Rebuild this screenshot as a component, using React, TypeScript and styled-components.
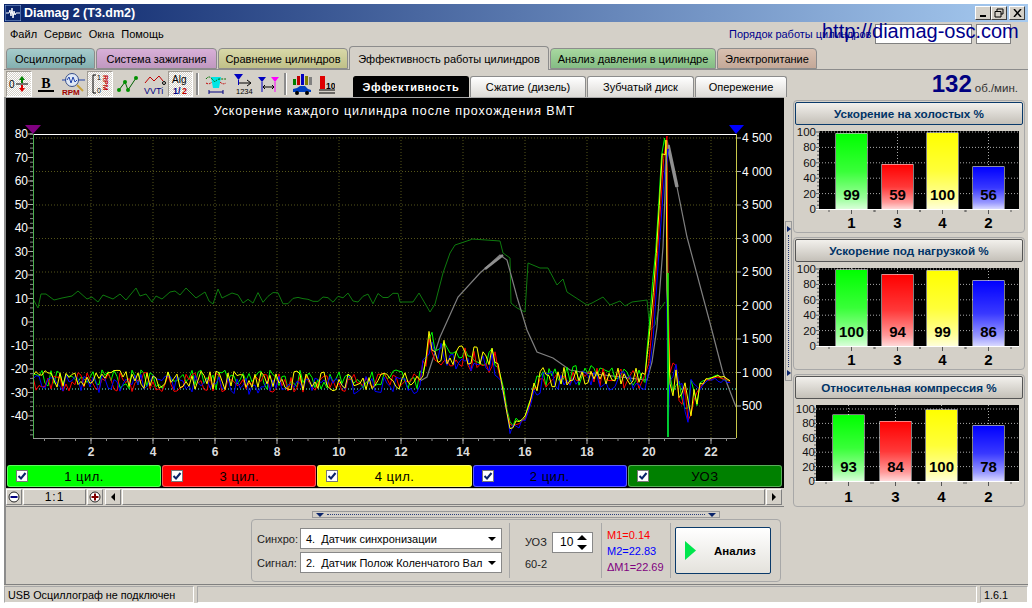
import { createGlobalStyle, styled } from 'styled-components';

const GlobalStyle = createGlobalStyle`
    html, body {
        margin: 0;
        padding: 0;
        background: #fff;
    }
    body {
        font-family: 'Liberation Sans', Arial, sans-serif;
        font-size: 11px;
        color: #000;
    }
`;

const Window = styled.div`
    position: relative;
    box-sizing: border-box;
    width: 1024px;
    height: 599px;
    margin: 4px 0 0 4px;
    background: #d4d0c8;
    display: flex;
    flex-direction: column;
    overflow: hidden;
`;

const TitleBar = styled.div`
    height: 18px;
    flex: none;
    display: flex;
    align-items: center;
    padding: 0 3px 0 1px;
    background: linear-gradient(90deg, #0a246a, #a6caf0);
    color: #fff;
`;

const TitleText = styled.span`
    flex: 1;
    margin-left: 3px;
    font-size: 12.5px;
    font-weight: bold;
`;

const WinButton = styled.button<{ $gap?: number }>`
    width: 16px;
    height: 14px;
    padding: 0;
    margin-left: ${(p) => p.$gap ?? 0}px;
    display: flex;
    align-items: center;
    justify-content: center;
    background: #d4d0c8;
    border: 1px solid;
    border-color: #fff #404040 #404040 #fff;
`;

const MenuBar = styled.div`
    height: 23px;
    flex: none;
    display: flex;
    align-items: center;
    padding: 0 17px 0 6px;
`;

const MenuItem = styled.span`
    margin-right: 7px;
    font-size: 11px;
`;

const OrderLabel = styled.span`
    margin-left: auto;
    width: 142px;
    color: #00008b;
    font-size: 11px;
    white-space: nowrap;
`;

const OrderField = styled.div<{ $width: number }>`
    box-sizing: border-box;
    width: ${(p) => p.$width}px;
    height: 20px;
    margin-left: 4px;
    background: #fff;
    border: 1px solid #808080;
`;

const Watermark = styled.a`
    position: absolute;
    left: 818px;
    top: 16px;
    color: #00008b;
    font-size: 20px;
    white-space: nowrap;
`;

const TabRow = styled.div`
    box-sizing: border-box;
    height: 25px;
    flex: none;
    display: flex;
    align-items: flex-end;
    gap: 1px;
    padding-left: 2px;
    border-bottom: 1px solid #8c8c8c;
`;

const Tab = styled.div<{ $color?: string; $width: number }>`
    box-sizing: border-box;
    width: ${(p) => p.$width}px;
    height: ${(p) => (p.$color ? 21 : 24)}px;
    margin-bottom: ${(p) => (p.$color ? 0 : -1)}px;
    display: flex;
    align-items: center;
    justify-content: center;
    border: 1px solid #8c8c8c;
    border-bottom: ${(p) => (p.$color ? '1px solid #8c8c8c' : 'none')};
    border-radius: 4px 4px 0 0;
    background: ${(p) => p.$color ?? '#d4d0c8'};
    font-size: 11px;
    white-space: nowrap;
`;

const ToolRow = styled.div`
    height: 27px;
    flex: none;
    display: flex;
    align-items: flex-end;
    padding-left: 2px;
`;

const ToolGroup = styled.div`
    width: 347px;
    height: 26px;
    flex: none;
    display: flex;
    align-items: center;
`;

const ToolButton = styled.div<{ $width: number; $pressed?: boolean }>`
    box-sizing: border-box;
    width: ${(p) => p.$width}px;
    height: 26px;
    flex: none;
    display: flex;
    align-items: center;
    justify-content: center;
    ${(p) => p.$pressed && `
        background: repeating-conic-gradient(#fff 0 25%, #d4d0c8 0 50%) 0 0 / 2px 2px;
        border: 1px solid;
        border-color: #a09c94 #fff #fff #a09c94;
    `}
`;

const ToolSeparator = styled.div<{ $margin: number }>`
    width: 2px;
    height: 22px;
    flex: none;
    margin: 0 ${(p) => p.$margin}px;
    background: #8c8c8c;
    border-right: 1px solid #fff;
`;

const SubTab = styled.div<{ $width: number; $active?: boolean }>`
    box-sizing: border-box;
    width: ${(p) => p.$width}px;
    height: 21px;
    margin-right: 1px;
    display: flex;
    align-items: center;
    justify-content: center;
    border: 1px solid ${(p) => (p.$active ? '#000' : '#8c8c8c')};
    border-bottom: none;
    border-radius: 3px 3px 0 0;
    background: ${(p) => (p.$active ? '#000' : 'linear-gradient(#fff, #dcdad6)')};
    color: ${(p) => (p.$active ? '#fff' : '#000')};
    font-weight: ${(p) => (p.$active ? 'bold' : 'normal')};
    letter-spacing: ${(p) => (p.$active ? '0.6px' : '0')};
    font-size: 11px;
`;

const Rpm = styled.div`
    margin-left: auto;
    margin-right: 10px;
    display: flex;
    align-items: baseline;
    gap: 3px;
    color: #333;
    font-size: 11.5px;
    white-space: nowrap;
`;

const RpmValue = styled.b`
    color: #000080;
    font-size: 24px;
    line-height: 26px;
`;

const Workspace = styled.div`
    height: 487px;
    flex: none;
    display: flex;
`;

const LeftColumn = styled.div`
    box-sizing: border-box;
    width: 780px;
    flex: none;
    display: flex;
    flex-direction: column;
    border-left: 2px solid #8c8c8c;
`;

const ChartPanel = styled.div`
    background: #000;
    border-top: 1px solid #aaa;
`;

const ChartTitle = styled.div`
    height: 22px;
    line-height: 27px;
    text-align: center;
    color: #fff;
    font-size: 12.5px;
    letter-spacing: 0.9px;
    margin-left: -1px;
`;

const PlotSvg = styled.svg`
    display: block;
`;

const Legend = styled.div`
    height: 23px;
    display: flex;
    gap: 1px;
    padding: 0 2px 1px 1px;
    box-sizing: border-box;
`;

const LegendItem = styled.div<{ $color: string }>`
    position: relative;
    flex: 1;
    display: flex;
    align-items: center;
    justify-content: center;
    background: ${(p) => p.$color};
    border-radius: 3px;
    box-shadow: inset 0 0 0 1px rgba(255, 255, 255, 0.35);
    font-size: 13px;
    letter-spacing: 0.5px;
`;

const LegendCheck = styled.span`
    position: absolute;
    left: 9px;
    top: 5px;
    box-sizing: border-box;
    width: 12px;
    height: 12px;
    display: flex;
    background: #fff;
    border: 1px solid #777;
`;

const ScrollRow = styled.div`
    box-sizing: border-box;
    height: 19px;
    padding-top: 1px;
    display: flex;
    align-items: flex-start;
    gap: 1px;
    border-bottom: 1px solid #808080;
`;

const ScrollButton = styled.div<{ $width: number; $before?: number; $after?: number }>`
    box-sizing: border-box;
    width: ${(p) => p.$width}px;
    height: 16px;
    flex: none;
    margin: 0 ${(p) => p.$after ?? 0}px 0 ${(p) => p.$before ?? 0}px;
    display: flex;
    align-items: center;
    justify-content: center;
    background: #d4d0c8;
    border: 1px solid;
    border-color: #fff #808080 #808080 #fff;
    font-size: 12px;
    letter-spacing: 1px;
`;

const ScrollTrack = styled(ScrollButton)`
    flex: 1;
    width: auto;
`;

const CollapseStrip = styled.div`
    box-sizing: border-box;
    width: 408px;
    height: 7px;
    margin: 4px 0 1px 306px;
    display: flex;
    align-items: center;
    gap: 3px;
    padding: 0 3px;
    border: 1px solid #999;
`;

const StripDots = styled.span`
    flex: 1;
    border-top: 1px dotted #2a3f7a;
`;

const ControlPanel = styled.div`
    box-sizing: border-box;
    width: 530px;
    height: 63px;
    margin-left: 245px;
    display: flex;
    align-items: center;
    border: 1px solid #a8a8a8;
    border-radius: 4px;
    padding: 0 8px 0 5px;
`;

const SelectGrid = styled.div`
    display: grid;
    grid-template-columns: 43px 202px;
    align-items: center;
    row-gap: 3px;
`;

const FieldLabel = styled.span`
    font-size: 11px;
    color: #222;
`;

const SelectBox = styled.div`
    box-sizing: border-box;
    height: 21px;
    display: flex;
    align-items: center;
    justify-content: space-between;
    padding: 0 5px;
    background: #fff;
    border: 1px solid #888;
    font-size: 11px;
    white-space: nowrap;
`;

const Caret = styled.span<{ $color?: string }>`
    width: 0;
    height: 0;
    border: 4px solid transparent;
    border-top: 4px solid ${(p) => p.$color ?? '#000'};
    border-bottom: none;
`;

const Divider = styled.div<{ $margin: string }>`
    width: 1px;
    height: 55px;
    margin: ${(p) => p.$margin};
    background: #a8a8a8;
    flex: none;
`;

const UozBlock = styled.div`
    display: grid;
    grid-template-columns: 27px 41px;
    align-items: center;
    row-gap: 5px;
`;

const SpinBox = styled.div`
    box-sizing: border-box;
    height: 21px;
    display: flex;
    align-items: center;
    justify-content: space-between;
    padding: 0 5px 0 7px;
    background: #fff;
    border: 1px solid #888;
    font-size: 12px;
`;

const MeasureBlock = styled.div`
    width: 63px;
    display: flex;
    flex-direction: column;
    gap: 2px;
    flex: none;
`;

const Measure = styled.span<{ $color: string }>`
    color: ${(p) => p.$color};
    font-size: 11px;
    line-height: 14px;
    white-space: nowrap;
`;

const AnalyzeButton = styled.div`
    box-sizing: border-box;
    width: 96px;
    height: 47px;
    display: flex;
    align-items: center;
    padding-left: 9px;
    gap: 18px;
    border: 1px solid #0a3a6a;
    border-radius: 2px;
    background: linear-gradient(#fff, #e4e2dc);
    font-size: 11.5px;
    font-weight: bold;
`;

const SideSplitter = styled.div`
    box-sizing: border-box;
    width: 7px;
    height: 160px;
    flex: none;
    margin: 124px 1px 0 1px;
    display: flex;
    flex-direction: column;
    align-items: center;
    justify-content: space-between;
    padding: 4px 0;
    border: 1px solid #999;
`;

const SideDots = styled.span`
    flex: 1;
    margin: 3px 0;
    border-left: 1px dotted #2a3f7a;
`;

const RightColumn = styled.div`
    width: 232px;
    flex: none;
    display: flex;
    flex-direction: column;
    gap: 4px;
    padding-top: 3px;
`;

const Group = styled.section`
    box-sizing: border-box;
    height: 133px;
    padding: 1px;
    border: 1px solid #a8a8a8;
    border-radius: 4px;
`;

const GroupHeader = styled.div<{ $focus?: boolean }>`
    box-sizing: border-box;
    height: 23px;
    display: flex;
    align-items: center;
    justify-content: center;
    border: 1px solid ${(p) => (p.$focus ? '#0a3a6a' : '#555')};
    border-radius: 2px;
    background: linear-gradient(#f2f0ec, #c4c0b8);
    color: #003366;
    font-size: 11.7px;
    font-weight: bold;
`;

const BarSvg = styled.svg`
    display: block;
`;

const StatusBar = styled.div`
    flex: 1;
    display: flex;
    gap: 3px;
    padding-top: 1px;
    border-top: 1px solid #808080;
`;

const StatusCell = styled.div<{ $width?: number }>`
    box-sizing: border-box;
    ${(p) => (p.$width ? `width: ${p.$width}px; flex: none;` : 'flex: 1;')}
    display: flex;
    align-items: center;
    padding-left: 3px;
    border: 1px solid;
    border-color: #a8a8a8 #fff #fff #a8a8a8;
    font-size: 10.8px;
    white-space: nowrap;
`;

// ---- chart data ----

function makeNoise(seed: number) {
    let s = seed;
    return () => {
        s = (s * 1664525 + 1013904223) % 4294967296;
        return s / 4294967296 - 0.5;
    };
}

type Pt = [number, number];

function lerp(points: Pt[], x: number) {
    for (let i = 1; i < points.length; i++) {
        if (x <= points[i][0]) {
            const [x0, y0] = points[i - 1];
            const [x1, y1] = points[i];
            return y0 + ((y1 - y0) * (x - x0)) / (x1 - x0 || 1);
        }
    }
    return points[points.length - 1][1];
}

const envelope: Pt[] = [
    [33, 381], [418, 382], [422, 368], [430, 340], [437, 352], [467, 358], [497, 362],
    [503, 388], [510, 427], [527, 416], [533, 387], [543, 378], [600, 377], [646, 378],
    [650, 343], [654, 290], [658, 240], [663, 157], [666, 136],
];

const envelopeTail: Pt[] = [
    [669, 362], [672, 375], [678, 385], [687, 403], [694, 392], [700, 386], [710, 377], [730, 380],
];

function amplitude(x: number) {
    if (x < 420) return 20;
    if (x < 500) return 26;
    if (x < 535) return 8;
    if (x < 646) return 20;
    if (x < 665) return 14;
    if (x < 700) return 40;
    return 4;
}

function signal(seed: number, offset: number, extra: Pt[]) {
    const rnd = makeNoise(seed);
    const pts: string[] = [];
    for (let x = 33; x <= 666; x += 3) {
        // the traces fan out sideways on the steep part of the spike
        const px = x >= 648 ? x + offset * 0.7 : x;
        pts.push(`${px},${(lerp(envelope, x) + offset + rnd() * amplitude(x)).toFixed(1)}`);
    }
    extra.forEach(([x, y]) => pts.push(`${x},${y}`));
    for (let x = 670; x <= 730; x += 3) {
        pts.push(`${x},${(lerp(envelopeTail, x) + offset * 0.7 + rnd() * amplitude(x)).toFixed(1)}`);
    }
    return pts.join(' ');
}

const traces = [
    { color: '#00ff00', points: signal(11, -2, [[667, 160], [668, 437], [668, 370]]) },
    { color: '#ff0000', points: signal(29, 1, [[667, 136], [668, 288]]) },
    { color: '#0000ff', points: signal(53, 3, [[666, 175], [668, 437], [669, 400]]) },
    { color: '#ffff00', points: signal(97, -1, [[666, 140], [667, 290]]) },
];

const grayLine =
    '420,381 427,377 440,337 458,297 480,273 500,255 507,260 517,297 527,330 537,352 553,358 570,370 587,373 647,380 652,362 657,327 663,247 667,140 677,187 687,237 710,323 723,373 736,407';

const uozHead: Pt[] = [[33, 299], [38, 308], [41, 294], [46, 294], [54, 300], [62, 298], [72, 296], [78, 291], [87, 299], [92, 297], [98, 302], [103, 295], [113, 299], [120, 294], [126, 300], [136, 288], [140, 296], [146, 294], [152, 302], [156, 296], [162, 299], [170, 292], [175, 291], [180, 295], [186, 288], [196, 298], [205, 292], [209, 301], [213, 304], [218, 289], [222, 298], [232, 293]];

function makeUoz() {
    const rnd = makeNoise(7);
    const pts: string[] = uozHead.map(([x, y]) => `${x},${y}`);
    for (let x = 238; x < 400; x += 5) {
        pts.push(`${x},${(298 + rnd() * 12).toFixed(1)}`);
    }
    const tail = '400,302 413,302 419,293 430,312 435,304 443,273 450,253 455,245 470,240 472,239 500,241 503,253 510,258 511,303 517,308 525,312 528,263 540,268 548,268 557,285 563,279 567,292 587,305 592,303 603,297 610,305 620,301 625,306 632,302 647,300 650,330 655,325 658,312 665,302';
    return `${pts.join(' ')} ${tail}`;
}

const uozLine = makeUoz();

const xLabels = [2, 4, 6, 8, 10, 12, 14, 16, 18, 20, 22];
const xPos = (v: number) => 29 + 31 * v;
const leftLabels = [80, 70, 60, 50, 40, 30, 20, 10, 0, -10, -20, -30, -40];
const leftPos = (v: number) => 322 - v * 2.35;
const rightLabels = ['4 500', '4 000', '3 500', '3 000', '2 500', '2 000', '1 500', '1 000', '500'];
const rightPos = (i: number) => 138 + i * 33.5;

function MainPlot() {
    const minorX: number[] = [];
    for (let v = 0.5; v < 23; v += 0.5) minorX.push(xPos(v));
    const minorY: number[] = [];
    for (let y = 134; y < 438; y += 4.7) minorY.push(y);
    return (
        <PlotSvg width={778} height={345} viewBox="6 120 778 345">
            {rightLabels.map((_, i) => (
                <line key={i} x1={33} x2={736} y1={rightPos(i)} y2={rightPos(i)} stroke="#55551a" strokeDasharray="1 2" />
            ))}
            {xLabels.map((v) => (
                <line key={v} x1={xPos(v)} x2={xPos(v)} y1={134} y2={438} stroke="#55551a" strokeDasharray="1 2" />
            ))}
            <line x1={33} x2={736} y1={389} y2={389} stroke="#66ffee" strokeDasharray="1 2" />
            <polyline points={uozLine} fill="none" stroke="#0e7a0e" />
            <polyline points={grayLine} fill="none" stroke="#808080" strokeWidth={1.2} />
            <line x1={668} x2={677} y1={145} y2={187} stroke="#909090" strokeWidth={3.5} />
            <line x1={485} x2={503} y1={269} y2={255} stroke="#909090" strokeWidth={2.5} />
            {traces.map((t) => (
                <polyline key={t.color} points={t.points} fill="none" stroke={t.color} />
            ))}
            <line x1={668} x2={668} y1={273} y2={437} stroke="#00ff00" strokeWidth={1.5} />

            <line x1={33} x2={736} y1={134.5} y2={134.5} stroke="#fff" />
            <line x1={33.5} x2={33.5} y1={134} y2={438} stroke="#4caf50" />
            <line x1={736.5} x2={736.5} y1={134} y2={438} stroke="#c8c84a" />
            <line x1={33} x2={736} y1={438.5} y2={438.5} stroke="#999" />
            {minorY.map((y) => (
                <line key={y} x1={30} x2={33} y1={y} y2={y} stroke="#888" />
            ))}
            {minorX.map((x) => (
                <line key={x} x1={x} x2={x} y1={438} y2={441} stroke="#888" />
            ))}
            {xLabels.map((v) => (
                <line key={v} x1={xPos(v)} x2={xPos(v)} y1={438} y2={444} stroke="#aaa" />
            ))}
            {leftLabels.map((v) => (
                <line key={v} x1={28} x2={33} y1={leftPos(v)} y2={leftPos(v)} stroke="#aaa" />
            ))}
            {rightLabels.map((_, i) => (
                <line key={i} x1={737} x2={741} y1={rightPos(i)} y2={rightPos(i)} stroke="#aaa" />
            ))}
            <polygon points="25,125 41,125 33,134" fill="#800080" />
            <polygon points="729,125 744,125 736,134" fill="#0000ff" />
            <g fontFamily="'Liberation Sans', sans-serif" fontSize={12} fill="#fff">
                {leftLabels.map((v) => (
                    <text key={v} x={28} y={leftPos(v) + 4} textAnchor="end">{v}</text>
                ))}
                {rightLabels.map((t, i) => (
                    <text key={t} x={742} y={rightPos(i) + 4}>{t}</text>
                ))}
                {xLabels.map((v) => (
                    <text key={v} x={xPos(v)} y={456} textAnchor="middle" fontWeight="bold" fill="#ddd">{v}</text>
                ))}
            </g>
        </PlotSvg>
    );
}

// ---- right side bars ----

interface BarChartProps {
    left: number;
    top: number;
    zero: number;
    full: number;
    labelY: number;
    labelEnd: number;
    bars: { x: number; value: number; name: string; color: string }[];
    id: string;
}

function BarChart({ left, top, zero, full, labelY, labelEnd, bars, id }: BarChartProps) {
    const scale = (zero - full) / 100;
    const ticks = [0, 20, 40, 60, 80, 100];
    const minor: number[] = [];
    for (let v = 0; v <= 100; v += 5) minor.push(v);
    return (
        <BarSvg width={228} height={106} viewBox="0 0 228 106">
            <defs>
                {bars.map((b) => (
                    <linearGradient key={b.name} id={`${id}${b.name}`} x1="0" y1="0" x2="0" y2="1">
                        <stop offset="0" stopColor={b.color} />
                        <stop offset="0.5" stopColor={b.color} stopOpacity={0.78} />
                        <stop offset="0.85" stopColor={b.color} stopOpacity={0.4} />
                        <stop offset="1" stopColor={b.color} stopOpacity={0.15} />
                    </linearGradient>
                ))}
            </defs>
            <rect x={left} y={top} width={227 - left - 3} height={zero - top} fill="#000" />
            {ticks.slice(1).map((v) => (
                <line key={v} x1={left} x2={224} y1={zero - v * scale} y2={zero - v * scale} stroke="#aaa" strokeDasharray="1 2" />
            ))}
            {bars.map((b) => (
                <line key={b.name} x1={b.x + 16.5} x2={b.x + 16.5} y1={top} y2={zero} stroke="#aaa" strokeDasharray="1 2" />
            ))}
            {minor.map((v) => (
                <line key={v} x1={left - (v % 20 === 0 ? 3 : 2)} x2={left} y1={zero - v * scale} y2={zero - v * scale} stroke="#555" />
            ))}
            <line x1={left - 3} x2={224} y1={zero + 0.5} y2={zero + 0.5} stroke="#fff" />
            {bars.map((b) => (
                <g key={b.name}>
                    <rect x={b.x + 0.5} y={zero - b.value * scale + 0.5} width={32} height={b.value * scale} fill="#fff" />
                    <rect x={b.x + 1} y={zero - b.value * scale + 1} width={31} height={b.value * scale - 1} fill={`url(#${id}${b.name})`} />
                    <text x={b.x + 16.5} y={zero - 9} textAnchor="middle" fontFamily="'Liberation Sans', sans-serif" fontWeight="bold" fontSize={15} fill="#000">
                        {b.value}
                    </text>
                    <line x1={b.x + 16.5} x2={b.x + 16.5} y1={zero + 1} y2={zero + 5} stroke="#555" />
                    <line x1={b.x - 6} x2={b.x - 6} y1={zero + 1} y2={zero + 3} stroke="#555" />
                    <line x1={b.x + 39} x2={b.x + 39} y1={zero + 1} y2={zero + 3} stroke="#555" />
                    <text x={b.x + 16.5} y={labelY} textAnchor="middle" fontFamily="'Liberation Sans', sans-serif" fontWeight="bold" fontSize={15} fill="#000">
                        {b.name}
                    </text>
                </g>
            ))}
            {ticks.map((v) => (
                <text key={v} x={labelEnd} y={zero - v * scale + 4} textAnchor="end" fontFamily="'Liberation Sans', sans-serif" fontSize={11.5} fill="#111">
                    {v}
                </text>
            ))}
        </BarSvg>
    );
}

const cylColors = ['#00ff00', '#ff0000', '#ffff00', '#0000ff'];
const names = ['1', '3', '4', '2'];

function makeBars(xs: number[], values: number[]) {
    return values.map((value, i) => ({ x: xs[i], value, name: names[i], color: cylColors[i] }));
}

const idleX = [40, 86, 131, 177];
const compX = [37, 84, 130, 177];

// ---- toolbar icons ----

const iconText = { fontFamily: "'Liberation Sans', sans-serif" };

function IconZero() {
    return (
        <svg width="22" height="20" viewBox="0 0 22 20">
            <text x="1" y="14" fontSize="10" style={iconText}>0</text>
            <line x1="8" x2="20" y1="10" y2="10" stroke="#000" />
            <path d="M14 2l3 4h-2v3h-2V6h-2z" fill="#008000" />
            <path d="M14 18l3-4h-2v-3h-2v3h-2z" fill="#e00000" />
        </svg>
    );
}

function IconBold() {
    return (
        <svg width="18" height="18" viewBox="0 0 18 18">
            <text x="9" y="13" textAnchor="middle" fontSize="14" fontWeight="bold" fontFamily="'Liberation Serif', serif">B</text>
            <rect x="1" y="15" width="16" height="2" fill="#000" />
        </svg>
    );
}

function IconRpm() {
    return (
        <svg width="24" height="24" viewBox="0 0 24 24">
            <circle cx="10" cy="8" r="6.5" fill="#dfe8f5" stroke="#39508a" />
            <path d="M5 8l2-3 2 6 2-6 2 5 2-2" fill="none" stroke="#2244aa" />
            <line x1="0" x2="4" y1="8" y2="8" stroke="#2244aa" />
            <line x1="16" x2="23" y1="8" y2="8" stroke="#2244aa" />
            <line x1="15" x2="21" y1="13" y2="19" stroke="#c9a23a" strokeWidth="2" />
            <text x="0" y="23" fontSize="8" fontWeight="bold" fill="#a00000" style={iconText}>RPM</text>
        </svg>
    );
}

function IconBracket() {
    return (
        <svg width="20" height="22" viewBox="0 0 20 22">
            <path d="M6 2H3v18h3" fill="none" stroke="#000" />
            <text x="7" y="7" fontSize="7" style={iconText}>1</text>
            <text x="7" y="20" fontSize="7" style={iconText}>0</text>
            <text x="0" y="0" fontSize="7" fontWeight="bold" fill="#c00000" transform="translate(13,2) rotate(90)" style={iconText}>RPM</text>
        </svg>
    );
}

function IconLines() {
    return (
        <svg width="22" height="18" viewBox="0 0 22 18">
            <path d="M2 15L8 7l3 8 8-12" fill="none" stroke="#006000" />
            <g fill="#009000">
                <circle cx="2" cy="15" r="2" />
                <circle cx="8" cy="7" r="2" />
                <circle cx="11" cy="15" r="2" />
                <circle cx="19" cy="3" r="2" />
            </g>
        </svg>
    );
}

function IconVvt() {
    return (
        <svg width="24" height="22" viewBox="0 0 24 22">
            <path d="M2 10l5-6 4 4 5-5 4 5" fill="none" stroke="#c00000" />
            <circle cx="21" cy="10" r="1.5" fill="none" stroke="#000" />
            <text x="1" y="21" fontSize="9" fill="#000080" style={iconText}>VVTi</text>
        </svg>
    );
}

function IconAlg() {
    return (
        <svg width="20" height="22" viewBox="0 0 20 22">
            <text x="1" y="10" fontSize="10" style={iconText}>Alg</text>
            <text x="2" y="21" fontSize="9" fontWeight="bold" fill="#000080" style={iconText}>1/</text>
            <text x="11" y="21" fontSize="9" fontWeight="bold" fill="#c00000" style={iconText}>2</text>
        </svg>
    );
}

function IconCyan() {
    return (
        <svg width="22" height="22" viewBox="0 0 22 22">
            <path d="M6 4h10l-2 11H8z" fill="#00e5e5" />
            <path d="M1 6q3-4 6 0t4 2 4-2 6 0" fill="none" stroke="#007000" strokeDasharray="2 1" />
            <path d="M1 10q3 2 6-1M15 9q3 3 6 1" fill="none" stroke="#c00000" strokeDasharray="2 1" />
            <path d="M4 19h14M4 17v4M18 17v4" stroke="#000080" fill="none" />
        </svg>
    );
}

function IconOrder() {
    return (
        <svg width="20" height="22" viewBox="0 0 20 22">
            <polygon points="1,1 10,1 5.5,7" fill="#0000c0" />
            <line x1="5.5" x2="5.5" y1="7" y2="12" stroke="#0000c0" />
            <path d="M6 10h11M14 7l4 3-4 3" fill="none" stroke="#000" />
            <text x="3" y="21" fontSize="7.5" style={iconText}>1234</text>
        </svg>
    );
}

function IconMarkers() {
    return (
        <svg width="22" height="18" viewBox="0 0 22 18">
            <polygon points="0,2 8,2 4,7" fill="#0000c0" />
            <line x1="4" x2="4" y1="7" y2="17" stroke="#0000c0" />
            <polygon points="13,2 21,2 17,7" fill="#ff00ff" />
            <line x1="17" x2="17" y1="7" y2="17" stroke="#ff00ff" />
            <path d="M6 12h9M7 10l-2 2 2 2M14 10l2 2-2 2" fill="none" stroke="#000" />
        </svg>
    );
}

function IconCar() {
    return (
        <svg width="22" height="22" viewBox="0 0 22 22">
            <rect x="2" y="6" width="3" height="6" fill="#008000" />
            <rect x="6" y="3" width="3" height="9" fill="#c00000" />
            <rect x="10" y="1" width="3" height="11" fill="#0000c0" />
            <rect x="14" y="3" width="3" height="9" fill="#808000" />
            <rect x="18" y="4" width="3" height="8" fill="#808080" />
            <path d="M2 19v-3l4-1 3-2h5l3 3 3 1v2z" fill="#0040c0" />
            <circle cx="6" cy="20" r="2" fill="#000" />
            <circle cx="16" cy="20" r="2" fill="#000" />
        </svg>
    );
}

function IconBar10() {
    return (
        <svg width="16" height="20" viewBox="0 0 16 20">
            <rect x="1" y="2" width="5" height="13" fill="#e00000" />
            <line x1="0" x2="16" y1="16" y2="16" stroke="#000" />
            <line x1="0" x2="16" y1="19" y2="19" stroke="#000" />
            <text x="7" y="15" fontSize="8.5" fontWeight="bold" style={iconText}>10</text>
        </svg>
    );
}

function Check() {
    return (
        <svg width="10" height="10" viewBox="0 0 10 10">
            <path d="M1.5 5l2.5 2.5L8.5 2" fill="none" stroke="#0a246a" strokeWidth="2" />
        </svg>
    );
}

const tabs = [
    { label: 'Осциллограф', width: 89, color: 'linear-gradient(#a6cccc, #84b0b0)' },
    { label: 'Система зажигания', width: 121, color: 'linear-gradient(#d8b0d8, #c098c0)' },
    { label: 'Сравнение цилиндров', width: 130, color: 'linear-gradient(#d8d8a8, #c0c088)' },
    { label: 'Эффективность работы цилиндров', width: 200 },
    { label: 'Анализ давления в цилиндре', width: 166, color: 'linear-gradient(#a8d8a0, #84bc84)' },
    { label: 'Электропитание', width: 100, color: 'linear-gradient(#d8c0b0, #c4a898)' },
];

const legend = [
    { label: '1 цил.', color: '#00ff00' },
    { label: '3 цил.', color: '#ff0000' },
    { label: '4 цил.', color: '#ffff00' },
    { label: '2 цил.', color: '#0000ff' },
    { label: 'УОЗ', color: '#008000' },
];

export default function App() {
    return (
        <>
            <GlobalStyle />
            <Window>
                <TitleBar>
                    <svg width="16" height="16" viewBox="0 0 16 16">
                        <rect width="16" height="16" fill="#0a246a" stroke="#8fb0e0" />
                        <path d="M1 8h3l1-3 1 6 1-8 1 10 1-7 1 4 1-2h4" fill="none" stroke="#fff" />
                    </svg>
                    <TitleText>Diamag 2 (Т3.dm2)</TitleText>
                    <WinButton aria-label="min">
                        <svg width="8" height="8" viewBox="0 0 8 8"><rect x="1" y="6" width="6" height="2" /></svg>
                    </WinButton>
                    <WinButton aria-label="max">
                        <svg width="10" height="10" viewBox="0 0 10 10"><path d="M3 3V1h6v5H7M1 3.5h6V9H1z" fill="none" stroke="#000" /></svg>
                    </WinButton>
                    <WinButton aria-label="close" $gap={2}>
                        <svg width="9" height="8" viewBox="0 0 9 8"><path d="M1 0l7 8M8 0L1 8" stroke="#000" strokeWidth="1.5" /></svg>
                    </WinButton>
                </TitleBar>

                <MenuBar>
                    <MenuItem>Файл</MenuItem>
                    <MenuItem>Сервис</MenuItem>
                    <MenuItem>Окна</MenuItem>
                    <MenuItem>Помощь</MenuItem>
                    <OrderLabel>Порядок работы цилиндров</OrderLabel>
                    <OrderField $width={97} />
                    <OrderField $width={35} />
                </MenuBar>
                <Watermark>http://diamag-osc.com</Watermark>

                <TabRow>
                    {tabs.map((t) => (
                        <Tab key={t.label} $width={t.width} $color={t.color}>{t.label}</Tab>
                    ))}
                </TabRow>

                <ToolRow>
                    <ToolGroup>
                        <ToolButton $width={26} $pressed><IconZero /></ToolButton>
                        <ToolButton $width={28}><IconBold /></ToolButton>
                        <ToolButton $width={27}><IconRpm /></ToolButton>
                        <ToolButton $width={26} $pressed><IconBracket /></ToolButton>
                        <ToolButton $width={29}><IconLines /></ToolButton>
                        <ToolButton $width={26}><IconVvt /></ToolButton>
                        <ToolButton $width={25} $pressed><IconAlg /></ToolButton>
                        <ToolSeparator $margin={3} />
                        <ToolButton $width={28}><IconCyan /></ToolButton>
                        <ToolButton $width={26}><IconOrder /></ToolButton>
                        <ToolButton $width={26}><IconMarkers /></ToolButton>
                        <ToolSeparator $margin={2} />
                        <ToolButton $width={26}><IconCar /></ToolButton>
                        <ToolButton $width={24}><IconBar10 /></ToolButton>
                    </ToolGroup>
                    <SubTab $width={116} $active>Эффективность</SubTab>
                    <SubTab $width={116}>Сжатие (дизель)</SubTab>
                    <SubTab $width={107}>Зубчатый диск</SubTab>
                    <SubTab $width={92}>Опережение</SubTab>
                    <Rpm><RpmValue>132</RpmValue>об./мин.</Rpm>
                </ToolRow>

                <Workspace>
                    <LeftColumn>
                        <ChartPanel>
                            <ChartTitle>Ускорение каждого цилиндра после прохождения ВМТ</ChartTitle>
                            <MainPlot />
                            <Legend>
                                {legend.map((l) => (
                                    <LegendItem key={l.label} $color={l.color}>
                                        <LegendCheck><Check /></LegendCheck>
                                        {l.label}
                                    </LegendItem>
                                ))}
                            </Legend>
                        </ChartPanel>
                        <ScrollRow>
                            <ScrollButton $width={16}>
                                <svg width="12" height="12" viewBox="0 0 12 12">
                                    <circle cx="6" cy="6" r="5" fill="#fff" stroke="#222" />
                                    <rect x="2.5" y="5" width="7" height="2" fill="#000080" />
                                </svg>
                            </ScrollButton>
                            <ScrollButton $width={63}>1:1</ScrollButton>
                            <ScrollButton $width={16}>
                                <svg width="12" height="12" viewBox="0 0 12 12">
                                    <circle cx="6" cy="6" r="5" fill="#fff" stroke="#222" />
                                    <path d="M2.5 6h7M6 2.5v7" stroke="#800000" strokeWidth="2" />
                                </svg>
                            </ScrollButton>
                            <ScrollButton $width={16} $before={1}>
                                <svg width="6" height="8" viewBox="0 0 6 8"><polygon points="5,0 5,8 1,4" /></svg>
                            </ScrollButton>
                            <ScrollTrack $width={0} />
                            <ScrollButton $width={16} $after={2}>
                                <svg width="6" height="8" viewBox="0 0 6 8"><polygon points="1,0 1,8 5,4" /></svg>
                            </ScrollButton>
                        </ScrollRow>
                        <CollapseStrip>
                            <Caret $color="#0a246a" />
                            <StripDots />
                            <Caret $color="#0a246a" />
                        </CollapseStrip>
                        <ControlPanel>
                            <SelectGrid>
                                <FieldLabel>Синхро:</FieldLabel>
                                <SelectBox>4.&nbsp; Датчик синхронизации<Caret /></SelectBox>
                                <FieldLabel>Сигнал:</FieldLabel>
                                <SelectBox>2.&nbsp; Датчик Полож Коленчатого Вал<Caret /></SelectBox>
                            </SelectGrid>
                            <Divider $margin="0 15px 0 7px" />
                            <UozBlock>
                                <FieldLabel>УОЗ</FieldLabel>
                                <SpinBox>
                                    10
                                    <svg width="10" height="15" viewBox="0 0 10 15">
                                        <polygon points="5,0 10,5 0,5" />
                                        <polygon points="5,15 10,10 0,10" />
                                    </svg>
                                </SpinBox>
                                <FieldLabel>60-2</FieldLabel>
                            </UozBlock>
                            <Divider $margin="0 5px 0 8px" />
                            <MeasureBlock>
                                <Measure $color="#ff0000">M1=0.14</Measure>
                                <Measure $color="#0000ff">M2=22.83</Measure>
                                <Measure $color="#800080">ΔM1=22.69</Measure>
                            </MeasureBlock>
                            <Divider $margin="0 4px 0 0" />
                            <AnalyzeButton>
                                <svg width="11" height="19" viewBox="0 0 11 19"><polygon points="0,0 11,9.5 0,19" fill="#00e64d" /></svg>
                                Анализ
                            </AnalyzeButton>
                        </ControlPanel>
                    </LeftColumn>
                    <SideSplitter>
                        <svg width="4" height="6" viewBox="0 0 4 6"><polygon points="0,0 4,3 0,6" fill="#0a246a" /></svg>
                        <SideDots />
                        <svg width="4" height="6" viewBox="0 0 4 6"><polygon points="0,0 4,3 0,6" fill="#0a246a" /></svg>
                    </SideSplitter>
                    <RightColumn>
                        <Group>
                            <GroupHeader $focus>Ускорение на холостых %</GroupHeader>
                            <BarChart id="idle" left={24} top={6} zero={84} full={7} labelY={103} labelEnd={21} bars={makeBars(idleX, [99, 59, 100, 56])} />
                        </Group>
                        <Group>
                            <GroupHeader>Ускорение под нагрузкой %</GroupHeader>
                            <BarChart id="load" left={24} top={6} zero={84} full={7} labelY={103} labelEnd={21} bars={makeBars(idleX, [100, 94, 99, 86])} />
                        </Group>
                        <Group>
                            <GroupHeader>Относительная компрессия %</GroupHeader>
                            <BarChart id="comp" left={21} top={6} zero={82} full={10} labelY={103} labelEnd={20} bars={makeBars(compX, [93, 84, 100, 78])} />
                        </Group>
                    </RightColumn>
                </Workspace>

                <StatusBar>
                    <StatusCell $width={190}>USB Осциллограф не подключен</StatusCell>
                    <StatusCell />
                    <StatusCell $width={48}>1.6.1</StatusCell>
                </StatusBar>
            </Window>
        </>
    );
}
